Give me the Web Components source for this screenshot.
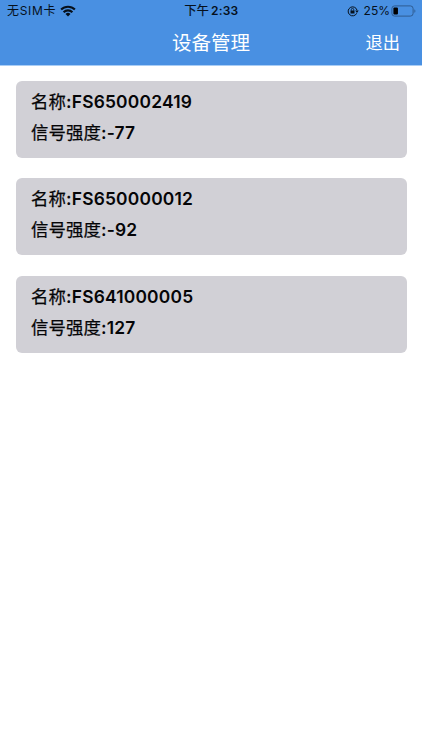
<!DOCTYPE html>
<html lang="zh-CN">
<head>
<meta charset="utf-8">
<meta name="viewport" content="width=device-width, initial-scale=1">
<title>设备管理</title>
<style>
    body {
        margin: 0;
        background: #fff;
        color: #050507;
        font-family: Inter, "Noto Sans CJK SC", sans-serif;
    }
</style>
</head>
<body>

<device-page>
    <status-bar slot="header" carrier="无SIM卡" time="2:33" battery="25"></status-bar>
    <nav-bar slot="header" action="退出">设备管理</nav-bar>
    <device-card name="FS650002419" signal="-77"></device-card>
    <device-card name="FS650000012" signal="-92"></device-card>
    <device-card name="FS641000005" signal="127"></device-card>
</device-page>

<script>
class DevicePage extends HTMLElement {
    connectedCallback() {
        this.attachShadow({ mode: "open" });
        this.shadowRoot.innerHTML = `
            <style>
                :host {
                    display: block;
                    min-height: 100vh;
                }

                header {
                    height: 65px;
                    border-bottom: 1px solid #a9cdf5;
                    background: #4990e2;
                    background-clip: padding-box;
                }

                main {
                    display: flex;
                    flex-direction: column;
                    gap: 20.5px;
                    padding: 14.8px 15.5px;
                }
            </style>

            <header><slot name="header"></slot></header>
            <main><slot></slot></main>
        `;
    }
}

class StatusBar extends HTMLElement {
    connectedCallback() {
        const level = Number(this.getAttribute("battery"));

        this.attachShadow({ mode: "open" });
        this.shadowRoot.innerHTML = `
            <style>
                :host {
                    display: grid;
                    grid-template-columns: 1fr auto 1fr;
                    align-items: center;
                    height: 22px;
                    padding: 0 6px 0 7px;
                    font-size: 12px;
                    line-height: 22px;
                    color: #06101c;
                    white-space: nowrap;
                }

                div {
                    display: flex;
                    align-items: center;
                }

                svg {
                    display: block;
                }

                .carrier {
                    letter-spacing: 0.7px;
                }

                .wifi {
                    margin: -1px 0 0 4px;
                }

                .time {
                    font-weight: 600;
                    letter-spacing: 0.2px;
                }

                .time span {
                    font-weight: 400;
                    -webkit-text-stroke: 0.25px;
                    margin-right: 2px;
                }

                .right {
                    justify-content: flex-end;
                }

                .lock {
                    margin-right: 5px;
                }

                .battery {
                    margin-left: 1px;
                }
            </style>

            <div>
                <span class="carrier">${this.getAttribute("carrier")}</span>
                <svg class="wifi" width="16" height="12" viewBox="0 0 16 12">
                    <g fill="none" stroke="#06101c" stroke-width="2.1">
                        <path d="M1.1 4.6a9.8 9.8 0 0 1 13.8 0"/>
                        <path d="M3.6 7.2a6.2 6.2 0 0 1 8.8 0"/>
                    </g>
                    <path fill="#06101c" d="M8 11.6 5.5 9.1a3.5 3.5 0 0 1 5 0z"/>
                </svg>
            </div>
            <div class="time"><span>下午</span>${this.getAttribute("time")}</div>
            <div class="right">
                <svg class="lock" width="12" height="12" viewBox="0 0 12 12">
                    <path fill="none" stroke="#06101c" d="M9.7 8.3A4.5 4.5 0 1 1 10 5.2"/>
                    <path fill="#06101c" d="M8.2 5.4h3.5L10 7.9zM3.5 5.5h4v3h-4z"/>
                    <path fill="none" stroke="#06101c" stroke-width=".8" d="M4.3 5.7V4.6a1.2 1.2 0 0 1 2.4 0v1.1"/>
                </svg>
                <span>${level}%</span>
                <svg class="battery" width="25" height="12" viewBox="0 0 25 12">
                    <rect x=".9" y=".9" width="21.2" height="10.2" rx="2.7" fill="none" stroke="#2f5c91"/>
                    <rect x="2.4" y="2.4" width="${18.2 * level / 100}" height="7.2" rx="1" fill="#000"/>
                    <path d="M23.4 4.2c1.3.5 1.3 3.1 0 3.6z" fill="#2f5c91"/>
                </svg>
            </div>
        `;
    }
}

class NavBar extends HTMLElement {
    connectedCallback() {
        this.attachShadow({ mode: "open" });
        this.shadowRoot.innerHTML = `
            <style>
                :host {
                    display: grid;
                    grid-template-columns: 1fr auto 1fr;
                    align-items: center;
                    height: 42px;
                    padding: 0 22px;
                    color: #fff;
                }

                h1 {
                    grid-column: 2;
                    margin: 0;
                    font-size: 19.5px;
                    font-weight: 400;
                    line-height: 40px;
                }

                button {
                    justify-self: end;
                    padding: 0;
                    border: 0;
                    background: none;
                    color: inherit;
                    font: inherit;
                    font-size: 17.3px;
                    line-height: 42px;
                }
            </style>

            <h1><slot></slot></h1>
            <button type="button">${this.getAttribute("action")}</button>
        `;
    }
}

class DeviceCard extends HTMLElement {
    connectedCallback() {
        this.attachShadow({ mode: "open" });
        this.shadowRoot.innerHTML = `
            <style>
                :host {
                    display: block;
                    box-sizing: border-box;
                    height: 77px;
                    padding: 6.2px 15.5px;
                    border-radius: 6px;
                    background: #d1d0d6;
                }

                p {
                    margin: 0;
                    height: 30.8px;
                    font-size: 17.4px;
                    font-weight: 600;
                    line-height: 30.8px;
                    letter-spacing: 0.2px;
                    white-space: nowrap;
                }

                /* medium weight for the Chinese labels */
                span {
                    font-weight: 400;
                    letter-spacing: 0.1px;
                    -webkit-text-stroke: 0.25px;
                }
            </style>

            <p><span>名称</span>:${this.getAttribute("name")}</p>
            <p><span>信号强度</span>:${this.getAttribute("signal")}</p>
        `;
    }
}

customElements.define("device-page", DevicePage);
customElements.define("status-bar", StatusBar);
customElements.define("nav-bar", NavBar);
customElements.define("device-card", DeviceCard);
</script>
</body>
</html>
